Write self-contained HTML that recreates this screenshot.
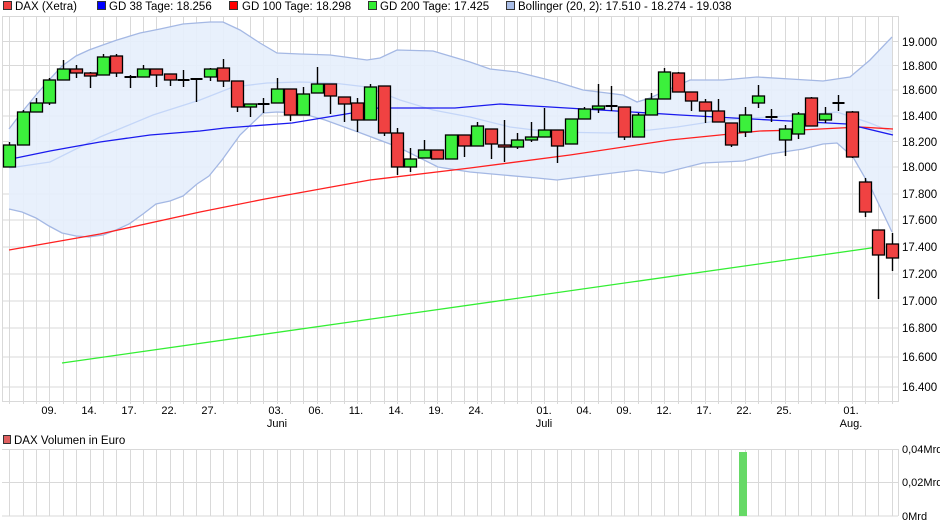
<!DOCTYPE html>
<html><head><meta charset="utf-8">
<style>
html,body{margin:0;padding:0;background:#fff;width:940px;height:526px;overflow:hidden}
svg{display:block;font-family:"Liberation Sans",sans-serif}
</style></head>
<body>
<svg id="s" width="940" height="526" xmlns="http://www.w3.org/2000/svg">
<rect width="940" height="526" fill="#fff"/>
<!-- legend -->
<g font-size="11.5" fill="#000">
<rect x="3.5" y="1.5" width="8" height="8" fill="#f04040" stroke="#333"/><text x="15" y="10">DAX (Xetra)</text>
<rect x="97.5" y="1.5" width="8" height="8" fill="#0000ff" stroke="#333"/><text x="109" y="10">GD 38 Tage: 18.256</text>
<rect x="229.5" y="1.5" width="8" height="8" fill="#ff0000" stroke="#333"/><text x="242" y="10">GD 100 Tage: 18.298</text>
<rect x="368.5" y="1.5" width="8" height="8" fill="#33ee33" stroke="#333"/><text x="380" y="10">GD 200 Tage: 17.425</text>
<rect x="506.5" y="1.5" width="8" height="8" fill="#a9bde6" stroke="#333"/><text x="518" y="10">Bollinger (20, 2): 17.510 - 18.274 - 19.038</text>
</g>
<g id="grid" stroke="#d9d9d9" stroke-width="1"></g>
<g id="band"></g>
<g id="plot"></g>
<!-- y labels -->
<g font-size="11.5" fill="#000">
<text x="902" y="46">19.000</text><text x="902" y="70">18.800</text><text x="902" y="94">18.600</text><text x="902" y="120">18.400</text><text x="902" y="146">18.200</text><text x="902" y="171">18.000</text><text x="902" y="198">17.800</text><text x="902" y="224">17.600</text><text x="902" y="251">17.400</text><text x="902" y="278">17.200</text><text x="902" y="305">17.000</text><text x="902" y="332">16.800</text><text x="902" y="361">16.600</text><text x="902" y="391">16.400</text>
</g>
<g font-size="11" fill="#000" text-anchor="middle">
<text x="49" y="414">09.</text><text x="89" y="414">14.</text><text x="129" y="414">17.</text><text x="169" y="414">22.</text><text x="209" y="414">27.</text><text x="276" y="414">03.</text><text x="316" y="414">06.</text><text x="356" y="414">11.</text><text x="396" y="414">14.</text><text x="436" y="414">19.</text><text x="476" y="414">24.</text><text x="544" y="414">01.</text><text x="584" y="414">04.</text><text x="624" y="414">09.</text><text x="664" y="414">12.</text><text x="704" y="414">17.</text><text x="744" y="414">22.</text><text x="784" y="414">25.</text><text x="851" y="414">01.</text>
<text x="277" y="427">Juni</text><text x="544" y="427">Juli</text><text x="851" y="427">Aug.</text>
</g>
<rect x="3.5" y="435.5" width="7" height="8" fill="#e06060" stroke="#333"/>
<text x="14" y="444" font-size="11.5">DAX Volumen in Euro</text>
<g font-size="11" fill="#000">
<text x="902" y="453">0,04Mrd</text><text x="902" y="486">0,02Mrd</text><text x="902" y="520">0Mrd</text>
</g>
</svg>
<script>
var NS="http://www.w3.org/2000/svg";
function el(p,t,a){var e=document.createElementNS(NS,t);for(var k in a)e.setAttribute(k,a[k]);p.appendChild(e);return e;}
var g=document.getElementById('grid');
var hy=[41.5,65.5,90,116,141.5,167,194,220,247,274,301,328,357,387];
hy.forEach(function(y){el(g,'line',{x1:2,x2:898,y1:y,y2:y});});
[449.5,482.5,516].forEach(function(y){el(g,'line',{x1:2,x2:898,y1:y,y2:y});});
for(var i=0;i<67;i++){var x=Math.round(9.3+13.37*i)+0.5;el(g,'line',{x1:x,x2:x,y1:16,y2:404});el(g,'line',{x1:x,x2:x,y1:449,y2:516});}
el(g,'rect',{x:2.5,y:16.5,width:896,height:385,fill:'none'});
el(g,'line',{x1:2,x2:898,y1:516,y2:516});
el(g,'line',{x1:898.5,x2:898.5,y1:449,y2:516});
function pts(a){return a.map(function(p){return p.join(',')}).join(' ');}
var up=[[9,129],[22,112],[36,95],[49,80],[62,66],[76,56],[89,50],[100,46],[117,40],[140,33],[160,29],[183,24],[210,22],[223,22],[240,30],[260,43],[277,53],[300,54],[330,55],[367,60],[380,58],[397,50],[433,51],[470,62],[490,69],[517,72],[537,77],[557,82],[583,90],[623,95],[637,102],[650,98],[663,92],[690,80],[723,80],[757,77],[790,79],[823,81],[850,77],[870,60],[892,37]];
var lo=[[9,209],[22,212],[36,218],[49,226],[62,233],[76,236],[89,237],[103,235],[116,230],[129,224],[143,214],[156,204],[170,201],[183,196],[197,184],[209,176],[222,160],[240,135],[263,113],[277,112],[300,113],[325,120],[358,132],[398,147],[438,167],[470,172],[503,175],[537,178],[557,180],[597,175],[637,170],[663,173],[703,163],[743,161],[770,154],[803,149],[823,144],[837,143],[853,157],[872,190],[892,232]];
var mid=[[9,168],[50,162],[100,137],[153,115],[200,100],[233,87],[267,83],[300,82],[333,83],[367,87],[400,100],[433,110],[470,117],[510,127],[550,132],[610,133],[650,130],[677,127],[723,120],[770,117],[803,115],[837,112],[870,123],[892,132]];
var b=document.getElementById('band');
el(b,'polygon',{points:pts(up.concat(lo.slice().reverse())),fill:'#e6eefc','fill-opacity':'0.9'});
el(b,'polyline',{points:pts(up),fill:'none',stroke:'#a4b8e4','stroke-width':1.3});
el(b,'polyline',{points:pts(lo),fill:'none',stroke:'#a4b8e4','stroke-width':1.3});
el(b,'polyline',{points:pts(mid),fill:'none',stroke:'#c4d6f8','stroke-width':1.3});
var P=document.getElementById('plot');
el(P,'polyline',{points:'62,363 878,247',fill:'none',stroke:'#33ee33','stroke-width':1.3});
el(P,'polyline',{points:pts([[9,250],[100,234],[200,212],[265,199],[370,180],[470,168],[570,155],[670,140],[760,131],[800,130],[860,127],[893,129]]),fill:'none',stroke:'#ff2020','stroke-width':1.3});
el(P,'polyline',{points:pts([[16,158],[50,151],[100,142],[150,135],[200,131],[225,128],[292,123],[352,113],[378,108],[455,108],[500,104],[550,107],[600,110],[680,115],[770,120],[847,124],[893,135]]),fill:'none',stroke:'#1a1aee','stroke-width':1.3});
var C=[['g',145,167,142,167],['g',112,145,110,145],['g',103,112,98,112],['g',80,103,78,105],['g',69,80,60,80],['r',69,73,65,78],['r',73,76,72,88],['g',57,75,54,75],['r',56,73,54,77],['d',77,77,75,88],['g',69,77,65,77],['r',69,75,69,87],['r',74,80,74,86],['d',80,80,70,87],['d',79,79,79,102],['g',69,77,68,81],['r',68,81,59,87],['r',81,107,81,112],['g',104,107,104,117],['d',104,104,98,113],['g',89,103,78,103],['r',89,115,89,121],['g',94,115,87,115],['g',84,93,67,93],['r',84,96,84,114],['r',97,104,97,122],['r',103,120,98,132],['g',87,120,84,120],['r',86,133,86,136],['r',133,167,128,175],['g',159,167,148,172],['g',150,158,140,158],['r',150,159,150,159],['g',135,159,135,159],['r',135,146,135,157],['g',126,146,122,146],['r',129,144,129,159],['r',145,147,120,162],['g',140,147,133,149],['g',137,140,122,142],['g',130,137,108,137],['r',130,146,130,163],['g',119,144,119,144],['g',109,119,107,119],['g',106,109,84,113],['d',106,106,86,111],['r',107,137,107,140],['g',115,137,113,137],['g',99,115,93,115],['g',72,99,68,99],['r',73,92,72,92],['r',92,101,92,111],['r',102,111,99,123],['r',111,122,99,122],['r',123,145,123,147],['g',115,132,107,137],['g',96,103,85,108],['d',117,117,109,122],['g',129,140,125,156],['g',114,134,112,139],['r',98,126,97,126],['g',114,120,107,123],['d',103,103,95,111],['r',112,157,111,158],['r',182,212,178,217],['r',230,255,230,299],['r',244,258,233,271]];
C.forEach(function(c,i){var x=Math.round(9.3+13.37*i)+0.5;
 el(P,'line',{x1:x,x2:x,y1:c[3],y2:c[4],stroke:'#000','stroke-width':1.4});
 if(c[0]=='d'){el(P,'line',{x1:x-6,x2:x+6,y1:c[1],y2:c[1],stroke:'#000','stroke-width':2});}
 else{el(P,'rect',{x:x-6,y:c[1],width:12,height:Math.max(2,c[2]-c[1]),fill:c[0]=='g'?'#3cf03c':'#f04242',stroke:'#000','stroke-width':1.3});}
});
el(P,'rect',{x:739,y:452,width:8,height:64,fill:'#66d966'});
</script>
</body></html>
